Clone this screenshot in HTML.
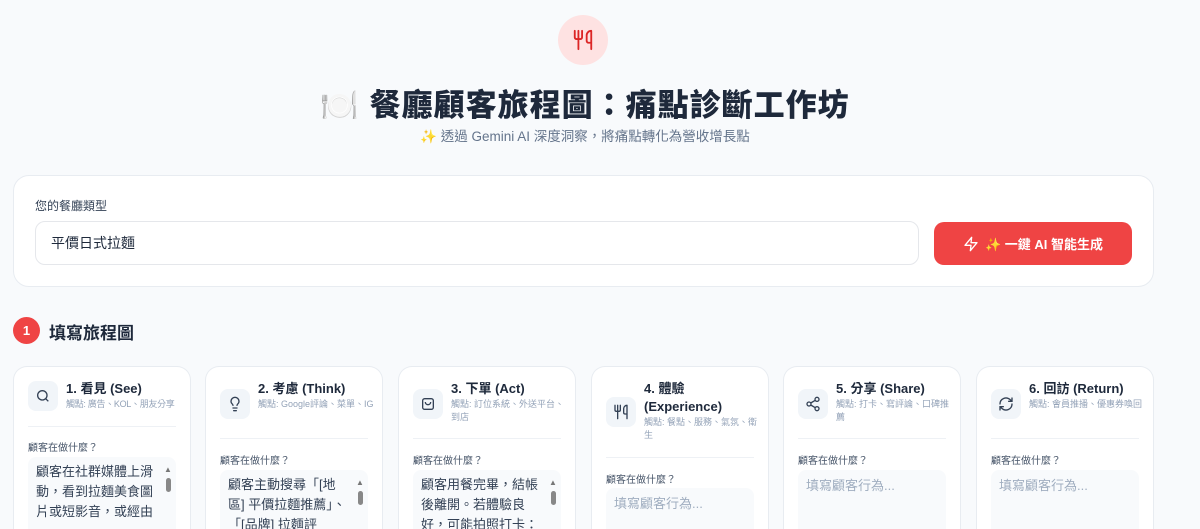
<!DOCTYPE html>
<html><head><meta charset="utf-8"><style>
*{box-sizing:border-box;margin:0;padding:0}
html,body{width:1200px;height:529px;overflow:hidden}
body{background:#f8fafc;font-family:"Liberation Sans","Noto Sans CJK TC",sans-serif;color:#1e293b;position:relative}
.abs{position:absolute}
.logo{left:558px;top:15px;width:50px;height:50px;border-radius:50%;background:#fee2e2;display:flex;align-items:center;justify-content:center}
h1{position:absolute;left:0;width:1170px;top:80px;text-align:center;font-size:31px;font-weight:900;letter-spacing:1px;color:#1e293b}
.sub{left:0;width:1170px;top:125px;text-align:center;font-size:13.5px;color:#64748b}
.top{left:13px;top:175px;width:1141px;height:112px;background:#fff;border:1px solid #e8ecf1;border-radius:16px}
.lbl{left:35px;top:197px;font-size:12px;color:#334155}
.inp{left:35px;top:221px;width:884px;height:44px;border:1px solid #e5e7eb;border-radius:10px;padding:11px 15px;font-size:14px;color:#1e293b;background:#fff}
.btn{left:934px;top:222px;width:198px;height:43px;background:#ef4444;border-radius:10px;color:#fff;font-size:13px;font-weight:700;display:flex;align-items:center;justify-content:center;gap:6px}
.num{left:13px;top:317px;width:27px;height:27px;border-radius:50%;background:#ef4444;color:#fff;font-size:13px;font-weight:700;display:flex;align-items:center;justify-content:center}
.sec{left:49px;top:319px;font-size:17px;font-weight:700;color:#1e293b}
.card{top:366px;width:178px;height:163px;background:#fff;border:1px solid #e8ecf1;border-bottom:none;border-radius:14px 14px 0 0;overflow:hidden}
.ib{position:absolute;left:14px;width:30px;height:30px;border-radius:8px;background:#f1f5f9;display:flex;align-items:center;justify-content:center}
.tt{position:absolute;left:52px;top:13px;width:116px;font-size:13px;font-weight:700;line-height:18px;color:#1e293b}
.tp{font-size:9px;font-weight:400;color:#94a3b8;line-height:13px}
.hr{position:absolute;left:14px;right:14px;height:1px;background:#eef1f5}
.ql{position:absolute;left:14px;font-size:10px;color:#475569}
.ta{position:absolute;left:14px;right:14px;height:80px;background:#f8fafc;border-radius:8px;padding:5px 16px 0 8px;font-size:13px;line-height:20px;color:#334155;overflow:hidden}
.ta.ph{color:#a0aec0;font-size:13px;padding-top:6px}
.sb{position:absolute;right:4px;top:8px;width:8px;font-size:8px;color:#777;text-align:center;line-height:10px}
.sb i{display:block;width:5px;height:14px;border-radius:3px;background:#888;margin:3px auto 0}
</style></head><body>
<div class="abs logo"><svg width="22" height="22" viewBox="0 0 24 24" fill="none" stroke="#dc2626" stroke-width="2" stroke-linecap="round" stroke-linejoin="round"><path d="M3 2v7c0 1.1.9 2 2 2h4a2 2 0 0 0 2-2V2"/><path d="M7 2v20"/><path d="M21 15V2a5 5 0 0 0-5 5v6c0 1.1.9 2 2 2h3Zm0 0v7"/></svg></div>
<h1>🍽️ 餐廳顧客旅程圖：痛點診斷工作坊</h1>
<div class="abs sub">✨ 透過 Gemini AI 深度洞察，將痛點轉化為營收增長點</div>
<div class="abs top"></div>
<div class="abs lbl">您的餐廳類型</div>
<div class="abs inp">平價日式拉麵</div>
<div class="abs btn"><svg width="16" height="16" viewBox="0 0 24 24" fill="none" stroke="#fff" stroke-width="2" stroke-linejoin="round"><path d="M13 2 3 14h9l-1 8 10-12h-9l1-8z"/></svg><span>✨ 一鍵 AI 智能生成</span></div>
<div class="abs num">1</div>
<div class="abs sec">填寫旅程圖</div>

<div class="abs card" style="left:13px"><div class="ib" style="top:14px"><svg width="16" height="16" viewBox="0 0 24 24" fill="none" stroke="#334155" stroke-width="2"><circle cx="11" cy="11" r="7"/><path d="m20 20-4-4"/></svg></div><div class="tt">1. 看見 (See)<div class="tp" style="letter-spacing:-0.3px;white-space:nowrap">觸點: 廣告、KOL、朋友分享</div></div><div class="hr" style="top:59px"></div><div class="ql" style="top:72px">顧客在做什麼？</div><div class="ta" style="top:90px">顧客在社群媒體上滑動，看到拉麵美食圖片或短影音，或經由<div class="sb">▲<i></i></div></div></div>

<div class="abs card" style="left:205px"><div class="ib" style="top:22px"><svg width="16" height="16" viewBox="0 0 24 24" fill="none" stroke="#334155" stroke-width="2" stroke-linecap="round"><path d="M9 18h6M10 22h4M15 14c.2-1 .7-1.7 1.5-2.5A5 5 0 0 0 18 8 6 6 0 0 0 6 8c0 1 .2 2.2 1.5 3.5.7.7 1.3 1.5 1.5 2.5"/></svg></div><div class="tt">2. 考慮 (Think)<div class="tp">觸點: Google評論、菜單、IG</div></div><div class="hr" style="top:71px"></div><div class="ql" style="top:85px">顧客在做什麼？</div><div class="ta" style="top:103px">顧客主動搜尋「[地區] 平價拉麵推薦」、「[品牌] 拉麵評<div class="sb">▲<i></i></div></div></div>

<div class="abs card" style="left:398px"><div class="ib" style="top:22px"><svg width="16" height="16" viewBox="0 0 24 24" fill="none" stroke="#334155" stroke-width="2" stroke-linejoin="round"><rect x="4" y="4" width="16" height="16" rx="3"/><path d="M8 9a4 4 0 0 0 8 0"/></svg></div><div class="tt">3. 下單 (Act)<div class="tp">觸點: 訂位系統、外送平台、到店</div></div><div class="hr" style="top:71px"></div><div class="ql" style="top:85px">顧客在做什麼？</div><div class="ta" style="top:103px">顧客用餐完畢，結帳後離開。若體驗良好，可能拍照打卡：<div class="sb">▲<i></i></div></div></div>

<div class="abs card" style="left:591px"><div class="ib" style="top:30px"><svg width="16" height="16" viewBox="0 0 24 24" fill="none" stroke="#334155" stroke-width="2" stroke-linecap="round" stroke-linejoin="round"><path d="M3 2v7c0 1.1.9 2 2 2h4a2 2 0 0 0 2-2V2"/><path d="M7 2v20"/><path d="M21 15V2a5 5 0 0 0-5 5v6c0 1.1.9 2 2 2h3Zm0 0v7"/></svg></div><div class="tt">4. 體驗 (Experience)<div class="tp">觸點: 餐點、服務、氣氛、衛生</div></div><div class="hr" style="top:90px"></div><div class="ql" style="top:104px">顧客在做什麼？</div><div class="ta ph" style="top:121px">填寫顧客行為...</div></div>

<div class="abs card" style="left:783px"><div class="ib" style="top:22px"><svg width="16" height="16" viewBox="0 0 24 24" fill="none" stroke="#334155" stroke-width="2"><circle cx="18" cy="5" r="3"/><circle cx="6" cy="12" r="3"/><circle cx="18" cy="19" r="3"/><path d="m8.6 13.5 6.8 4M15.4 6.5l-6.8 4"/></svg></div><div class="tt">5. 分享 (Share)<div class="tp">觸點: 打卡、寫評論、口碑推薦</div></div><div class="hr" style="top:71px"></div><div class="ql" style="top:85px">顧客在做什麼？</div><div class="ta ph" style="top:103px">填寫顧客行為...</div></div>

<div class="abs card" style="left:976px"><div class="ib" style="top:22px"><svg width="16" height="16" viewBox="0 0 24 24" fill="none" stroke="#334155" stroke-width="2" stroke-linecap="round"><path d="M3 12a9 9 0 0 1 15-6.7L21 8M21 3v5h-5M21 12a9 9 0 0 1-15 6.7L3 16M3 21v-5h5"/></svg></div><div class="tt">6. 回訪 (Return)<div class="tp">觸點: 會員推播、優惠券喚回</div></div><div class="hr" style="top:71px"></div><div class="ql" style="top:85px">顧客在做什麼？</div><div class="ta ph" style="top:103px">填寫顧客行為...</div></div>
</body></html>
